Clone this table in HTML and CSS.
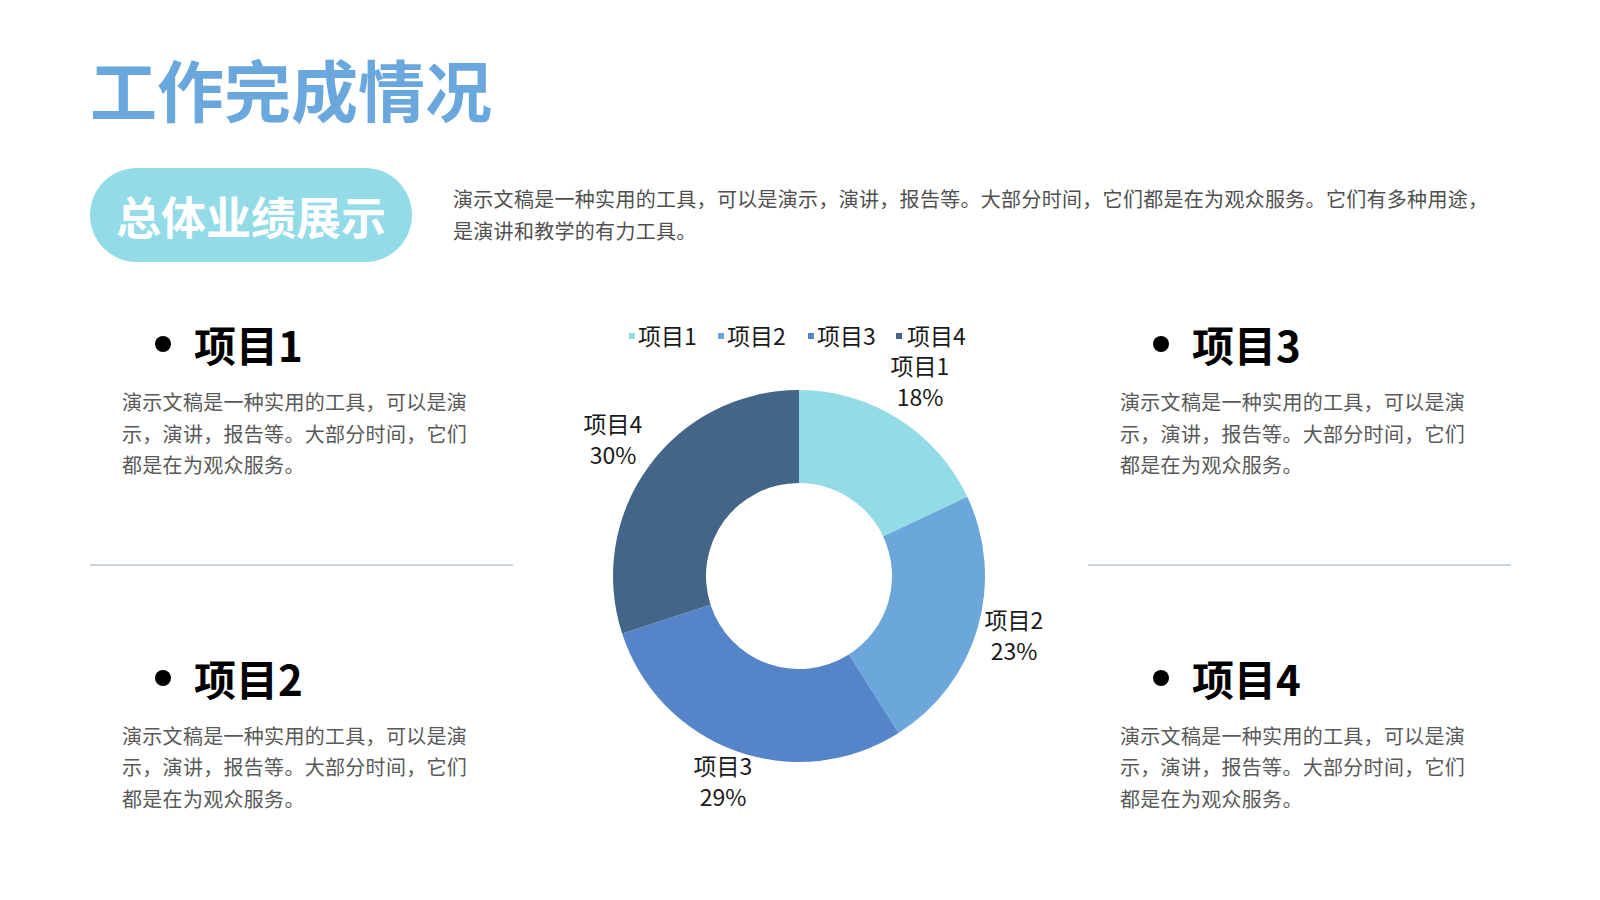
FILE: index.html
```html
<!DOCTYPE html>
<html lang="zh-CN">
<head>
<meta charset="utf-8">
<title>工作完成情况</title>
<link rel="stylesheet" href="styles.css">
</head>
<body>
<div class="slide">
  <h1 class="title">工作完成情况</h1>
  <div class="intro">
    <div class="pill">总体业绩展示</div>
    <p class="intro-text">演示文稿是一种实用的工具，可以是演示，演讲，报告等。大部分时间，它们都是在为观众服务。它们有多种用途，是演讲和教学的有力工具。</p>
  </div>
  <div class="main">
    <div class="col">
      <div class="item">
        <div class="item-head"><span class="dot"></span><span class="item-title">项目1</span></div>
        <p class="item-body">演示文稿是一种实用的工具，可以是演示，演讲，报告等。大部分时间，它们都是在为观众服务。</p>
      </div>
      <div class="divider"></div>
      <div class="item">
        <div class="item-head"><span class="dot"></span><span class="item-title">项目2</span></div>
        <p class="item-body">演示文稿是一种实用的工具，可以是演示，演讲，报告等。大部分时间，它们都是在为观众服务。</p>
      </div>
    </div>
    <div class="chart">
      <svg width="575" height="510" viewBox="0 0 575 510" xmlns="http://www.w3.org/2000/svg">
        <rect class="c1" x="116" y="23" width="6" height="6"/>
        <text class="legend" x="125" y="34.7">项目1</text>
        <rect class="c2" x="205" y="23" width="6" height="6"/>
        <text class="legend" x="214" y="34.7">项目2</text>
        <rect class="c3" x="295" y="23" width="6" height="6"/>
        <text class="legend" x="304" y="34.7">项目3</text>
        <rect class="c4" x="383" y="23" width="6" height="6"/>
        <text class="legend" x="394" y="34.7">项目4</text>

        <path class="c1" d="M286 80 A186 186 0 0 1 454.30 186.80 L370.15 226.40 A93 93 0 0 0 286 173 Z"/>
        <path class="c2" d="M454.30 186.80 A186 186 0 0 1 385.66 423.05 L335.83 344.52 A93 93 0 0 0 370.15 226.40 Z"/>
        <path class="c3" d="M385.66 423.05 A186 186 0 0 1 109.10 323.48 L197.55 294.74 A93 93 0 0 0 335.83 344.52 Z"/>
        <path class="c4" d="M109.10 323.48 A186 186 0 0 1 286 80 L286 173 A93 93 0 0 0 197.55 294.74 Z"/>

        <text class="label" x="407" y="64.7"><tspan x="407">项目1</tspan><tspan x="407" dy="31">18%</tspan></text>
        <text class="label" x="501" y="319.2"><tspan x="501">项目2</tspan><tspan x="501" dy="31">23%</tspan></text>
        <text class="label" x="210" y="465.2"><tspan x="210">项目3</tspan><tspan x="210" dy="31">29%</tspan></text>
        <text class="label" x="100" y="122.9"><tspan x="100">项目4</tspan><tspan x="100" dy="31">30%</tspan></text>
      </svg>
    </div>
    <div class="col">
      <div class="item">
        <div class="item-head"><span class="dot"></span><span class="item-title">项目3</span></div>
        <p class="item-body">演示文稿是一种实用的工具，可以是演示，演讲，报告等。大部分时间，它们都是在为观众服务。</p>
      </div>
      <div class="divider"></div>
      <div class="item">
        <div class="item-head"><span class="dot"></span><span class="item-title">项目4</span></div>
        <p class="item-body">演示文稿是一种实用的工具，可以是演示，演讲，报告等。大部分时间，它们都是在为观众服务。</p>
      </div>
    </div>
  </div>
</div>
</body>
</html>
```

FILE: styles.css
```css
html, body {
  margin: 0;
  padding: 0;
  background: #ffffff;
}

body {
  font-family: "Noto Sans CJK SC", "Noto Sans", sans-serif;
}

.slide {
  width: 1600px;
  height: 900px;
  padding: 0 89px 0 90px;
  box-sizing: border-box;
  overflow: hidden;
}

.title {
  margin: 48px 0 0;
  font-size: 67px;
  line-height: 80px;
  font-weight: 700;
  color: #6aa7dc;
}

.intro {
  display: flex;
  align-items: center;
  margin-top: 40px;
}

.pill {
  flex: none;
  width: 322px;
  height: 94px;
  border-radius: 47px;
  background: #93dbe7;
  color: #ffffff;
  font-size: 45px;
  font-weight: 700;
  line-height: 1;
  display: flex;
  align-items: center;
  justify-content: center;
}

.intro-text {
  margin: 0 0 0 41px;
  width: 1045px;
  font-size: 20px;
  letter-spacing: 0.3px;
  line-height: 32px;
  color: #505050;
}

.main {
  display: flex;
  margin-top: 48px;
}

.col {
  flex: none;
  width: 423px;
  padding-top: 9px;
  box-sizing: border-box;
}

.chart {
  flex: none;
  width: 575px;
}

.chart svg {
  display: block;
}

.item-head {
  display: flex;
  align-items: center;
  height: 50px;
  padding-left: 65px;
}

.dot {
  flex: none;
  width: 16px;
  height: 16px;
  border-radius: 50%;
  background: #000000;
  margin-right: 23px;
}

.item-title {
  font-size: 42px;
  font-weight: 700;
  line-height: 50px;
  color: #000000;
}

.item-body {
  margin: 17px 0 0 32px;
  width: 350px;
  font-size: 20px;
  letter-spacing: 0.3px;
  line-height: 31.5px;
  color: #595959;
}

.divider {
  height: 2px;
  background: #c9d3dd;
  margin: 83px 0 87px;
}

.c1 { fill: #93dce6; }
.c2 { fill: #6ba7db; }
.c3 { fill: #5585c8; }
.c4 { fill: #436587; }

.chart text {
  font-family: "Noto Sans CJK SC", "Noto Sans", sans-serif;
  font-size: 23px;
  fill: #1a1a1a;
}

.chart .label {
  text-anchor: middle;
}
```
